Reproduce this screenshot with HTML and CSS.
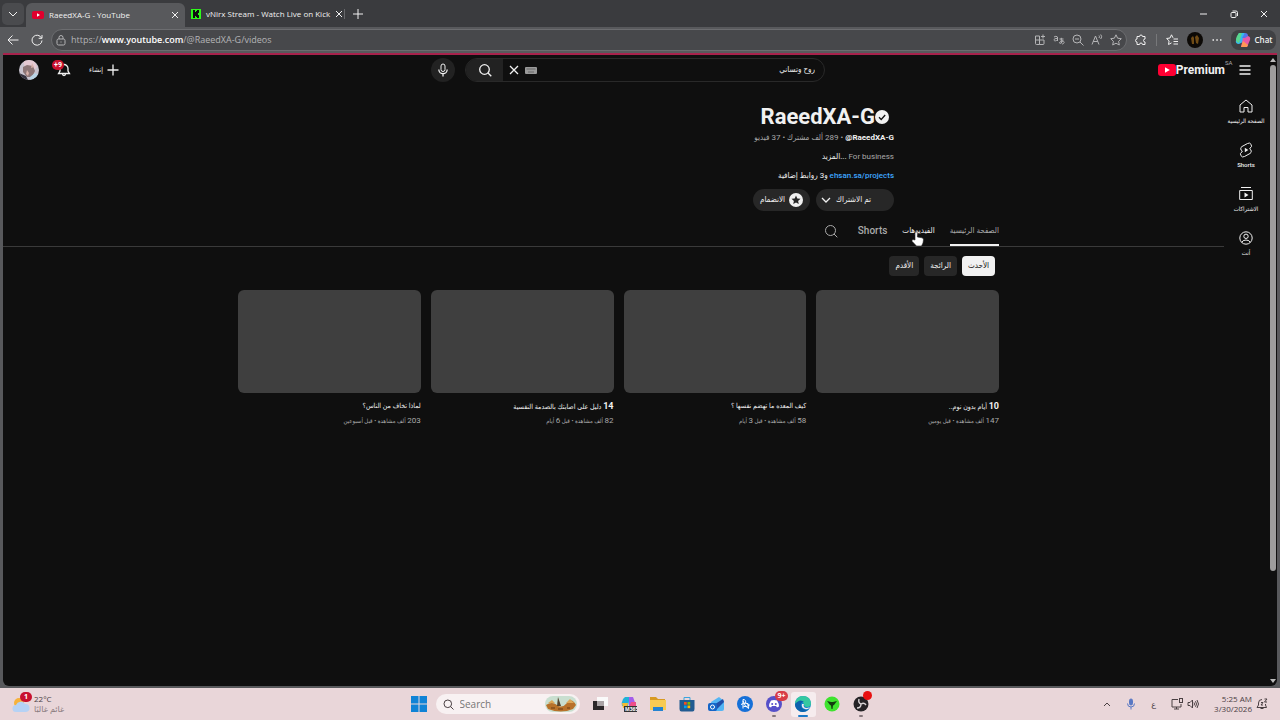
FILE: index.html
```
<!DOCTYPE html>
<html lang="ar">
<head>
    <meta charset="UTF-8">
    <meta name="viewport" content="width=device-width, initial-scale=1.0">
    <title>RaeedXA-G - YouTube</title>
    <link rel="stylesheet" href="styles.css">
</head>
<body>
    <!-- Browser tabs -->
    <header class="tabbar">
        <button class="tab-menu" aria-label="Tab actions"><svg width="10" height="10" viewBox="0 0 10 10"><path d="M1 3l4 4 4-4"/></svg></button>
        <div class="tab active">
            <svg width="12" height="10" viewBox="0 0 12 10"><rect x="0" y="1" width="12" height="8" rx="2" fill="#e0002d" stroke="none"/><path d="M5 3.2v3.6L8 5z" fill="#fff" stroke="none"/></svg>
            <span class="tab-title">RaeedXA-G - YouTube</span>
            <button class="tab-close" aria-label="Close tab"><svg width="8" height="8" viewBox="0 0 8 8"><path d="M1 1l6 6M7 1L1 7"/></svg></button>
        </div>
        <div class="tab">
            <svg width="10" height="10" viewBox="0 0 10 10"><rect width="10" height="10" fill="#2dfb19" stroke="none"/><path d="M2 1h2v2h1V2h1V1h2v3H7v2h1v3H6V8H5V7H4v2H2z" fill="#101010" stroke="none"/></svg>
            <span class="tab-title">vNirx Stream - Watch Live on Kick</span>
            <button class="tab-close" aria-label="Close tab"><svg width="8" height="8" viewBox="0 0 8 8"><path d="M1 1l6 6M7 1L1 7"/></svg></button>
        </div>
        <button class="new-tab" aria-label="New tab"><svg width="10" height="10" viewBox="0 0 10 10"><path d="M5 0v10M0 5h10"/></svg></button>
        <div class="window-buttons">
            <button aria-label="Minimize"><svg width="8" height="8" viewBox="0 0 8 8"><path d="M0 4h7"/></svg></button>
            <button aria-label="Restore"><svg width="8" height="8" viewBox="0 0 8 8"><rect x="1" y="2.5" width="5" height="5" rx="1"/><path d="M2.5 1h3.5a1.5 1.5 0 0 1 1.500 1.500v3.500"/></svg></button>
            <button aria-label="Close"><svg width="8" height="8" viewBox="0 0 8 8"><path d="M1 1l6 6M7 1L1 7"/></svg></button>
        </div>
    </header>

    <!-- Address bar -->
    <nav class="toolbar">
        <button aria-label="Back"><svg width="12" height="12" viewBox="0 0 12 12"><path d="M11.500 6H1M5.500 1.500L1 6l4.500 4.500"/></svg></button>
        <button aria-label="Reload"><svg width="12" height="12" viewBox="0 0 12 12"><path d="M10.500 4A5 5 0 1 0 11 6.500M11 1v3.300H7.700"/></svg></button>
        <div class="address">
            <svg width="10" height="11" viewBox="0 0 10 11"><rect x="1" y="4" width="8" height="6" rx="1.500"/><path d="M3 4V2.500a2 2 0 0 1 4 0V4M5 6.500v1"/></svg>
            <a class="url" href="#">https://<b>www.youtube.com</b>/@RaeedXA-G/videos</a>
            <div class="address-icons">
                <svg width="12" height="12" viewBox="0 0 12 12"><path d="M1.500 2H5.500V10.500H2.500a1 1 0 0 1-1-1zM1.500 6H10V9.500a1 1 0 0 1-1 1H5.500M9 .5v4M7 2.500h4"/></svg>
                <svg width="12" height="12" viewBox="0 0 12 12"><path d="M1 3q2-1.500 3.500 0V7M4.500 4.500C2 4.300 1 5 1 6s2 1.400 3.500-.3M6.500 5h4M8.300 3.800v5.500M10 6.200C9 9 7 10 6.500 9S9 6 10.500 7.300 10.500 10 9 10"/></svg>
                <svg width="12" height="12" viewBox="0 0 12 12"><circle cx="5" cy="5" r="4"/><path d="M3 5h4M8 8l3.500 3.500"/></svg>
                <svg width="12" height="12" viewBox="0 0 12 12"><path d="M1 10.500L4.500 2 8 10.500M2.200 7.500h4.600M8 1.500q1 1.200 0 2.500M9.700.5q2 2.200 0 4.500"/></svg>
                <svg width="12" height="12" viewBox="0 0 12 12"><path d="M6 .8l1.600 3.400 3.700.5-2.700 2.600.7 3.700L6 9.200 2.700 11l.7-3.700L.7 4.700l3.700-.5z"/></svg>
            </div>
        </div>
        <div class="toolbar-end">
            <button aria-label="Extensions"><svg width="12" height="12" viewBox="0 0 12 12"><path d="M2 2.500h2.500a1.500 1.500 0 0 1 3 0H10V5a1.500 1.500 0 0 0 0 3v2.500H7.500a1.500 1.500 0 0 0-3 0H2V8a1.500 1.500 0 0 1 0-3z"/></svg></button>
            <span class="divider"></span>
            <button aria-label="Favorites"><svg width="12" height="12" viewBox="0 0 12 12"><path d="M7 3.800L5.500.8 4 4l-3.400.5 2.500 2.400-.6 3.600 3-1.600M7.500 5H12M7.500 7.500H12M7.500 10H12"/></svg></button>
            <button aria-label="Profile"><svg width="16" height="16" viewBox="0 0 16 16"><circle cx="8" cy="8" r="8" fill="#0c0906" stroke="none"/><path d="M4 6l2-2 1 2v6H5zM8 5l2-2 2 3-1 6-2-1z" fill="#6f4b16" stroke="none"/></svg></button>
            <button aria-label="More"><svg width="10" height="10" viewBox="0 0 10 10"><path d="M.5 5h1.500M4.300 5h1.500M8 5h1.500" stroke-width="1.500"/></svg></button>
            <button class="chat"><svg width="16" height="16" viewBox="0 0 16 16"><path d="M4 1h6L8 10 4 12Q0 12 1 8z" fill="#35b8f0" stroke="none"/><path d="M4 1h3L4 11 2 10Q0 8 2 4z" fill="#58d68d" stroke="none"/><path d="M12 15H6L8 6l4-2q4 0 3 4z" fill="#e659a8" stroke="none"/><path d="M10 1q3 0 3 3l-3 2-3 0z" fill="#5574ec" stroke="none"/><path d="M6 15l2-6 5 4-1 2z" fill="#ff9855" stroke="none"/></svg><span>Chat</span></button>
        </div>
    </nav>

    <!-- YouTube page -->
    <div class="viewport" dir="rtl">
        <div class="scrollbar"><span class="arrow up"></span><span class="thumb"></span><span class="arrow down"></span></div>
        <div class="page">
            <header class="masthead">
                <div class="masthead-start">
                    <button aria-label="الدليل"><svg width="12" height="12" viewBox="0 0 12 12"><path d="M.5 2h11M.5 6h11M.5 10h11" stroke-width="1.500"/></svg></button>
                    <a class="logo" href="#" dir="ltr">
                        <svg width="18" height="12" viewBox="0 0 18 12"><rect width="18" height="12" rx="3" fill="#ff0033" stroke="none"/><path d="M7 3.300v5.400L11.800 6z" fill="#fff" stroke="none"/></svg>
                        <span>Premium</span><sup>SA</sup>
                    </a>
                </div>
                <div class="masthead-center">
                    <form class="search">
                        <input type="text" aria-label="بحث" value="روح وتساني">
                        <svg width="12" height="7" viewBox="0 0 12 7"><rect width="12" height="7" rx="1" fill="#9a9a9a" stroke="none"/><path d="M1.500 2h9M3 5h6" stroke="#666"/></svg>
                        <button type="button" class="clear" aria-label="مسح"><svg width="10" height="10" viewBox="0 0 10 10"><path d="M1 1l8 8M9 1L1 9" stroke-width="1.300"/></svg></button>
                        <button type="button" class="search-button" aria-label="بحث"><svg width="14" height="14" viewBox="0 0 14 14"><circle cx="6.500" cy="6.500" r="4.800" stroke-width="1.300"/><path d="M10 10l3.300 3.300" stroke-width="1.300"/></svg></button>
                    </form>
                    <button class="mic" aria-label="البحث الصوتي"><svg width="14" height="14" viewBox="0 0 14 14"><rect x="5" y="1" width="4" height="7.500" rx="2"/><path d="M2.800 6.500a4.200 4.200 0 0 0 8.400 0M7 11v2.500" stroke-width="1.300"/></svg></button>
                </div>
                <div class="masthead-end">
                    <button class="create"><svg width="12" height="12" viewBox="0 0 12 12"><path d="M6 .5v11M.5 6h11" stroke-width="1.300"/></svg><span>إنشاء</span></button>
                    <button class="bell" aria-label="الإشعارات"><svg width="14" height="14" viewBox="0 0 14 14"><path d="M7 1.500a4 4 0 0 0-4 4V8l-1.500 2.500h11L11 8V5.500a4 4 0 0 0-4-4zM5.500 11a1.500 1.500 0 0 0 3 0" stroke-width="1.300"/></svg><span class="badge" dir="ltr">+9</span></button>
                    <button aria-label="الحساب"><svg width="20" height="20" viewBox="0 0 20 20"><defs><clipPath id="face"><circle cx="10" cy="10" r="10"/></clipPath></defs><g clip-path="url(#face)" stroke="none"><path fill="#c9c4cf" d="M0 0h20v20H0z"/><path d="M4 0h11l3 7-4 4-8-3z" fill="#e5c9d2"/><path d="M4 7l4-2 6 1 2 5-3 6H8L4 12z" fill="#8d7677"/><path d="M0 13l7 3 2 4H0z" fill="#35323f"/><path d="M8 10l2 3-1 3-2-2zM13 3l2 4-3 1z" fill="#d7b1aa"/><path d="M11 17l5-4 4 2v5h-9z" fill="#b9d4e5"/></g></svg></button>
                </div>
            </header>

            <div class="layout">
                <aside class="guide">
                    <a href="#"><svg width="16" height="16" viewBox="0 0 16 16"><path d="M2 7l6-5 6 5v7h-4V9.500H6V14H2z"/></svg><span>الصفحة الرئيسية</span></a>
                    <a href="#"><svg width="16" height="16" viewBox="0 0 16 16"><path d="M9.500 1.500L4 4.500a2.500 2.500 0 0 0 .3 4.500L3.800 10a2.500 2.500 0 0 0 2.700 4.500L12 11.500a2.500 2.500 0 0 0-.3-4.500l.5-1a2.500 2.500 0 0 0-2.700-4.500z"/><path d="M6.800 5.800v4.400L10.300 8z" fill="#f1f1f1" stroke="none"/></svg><span>Shorts</span></a>
                    <a href="#"><svg width="16" height="16" viewBox="0 0 16 16"><path d="M3 1.500h10M1.700 4.500h12.600v9H1.700z"/><path d="M6.500 6.500v5L10.500 9z" fill="#f1f1f1" stroke="none"/></svg><span>الاشتراكات</span></a>
                    <a href="#"><svg width="16" height="16" viewBox="0 0 16 16"><circle cx="8" cy="8" r="6.200"/><circle cx="8" cy="6.300" r="2.200"/><path d="M3.800 12.500q.7-2.500 4.200-2.500t4.200 2.500"/></svg><span>أنت</span></a>
                </aside>

                <main class="channel">
                    <section class="profile column">
                        <h1>RaeedXA-G<svg width="14" height="14" viewBox="0 0 14 14"><circle cx="7" cy="7" r="7" fill="#f1f1f1" stroke="none"/><path d="M4 7.300l2.200 2.200 4-4.500" stroke="#0f0f0f" stroke-width="1.300"/></svg></h1>
                        <p><b dir="ltr">@RaeedXA-G</b> • 289 ألف مشترك • 37 فيديو</p>
                        <p>For business <span>...المزيد</span></p>
                        <p><a href="#">ehsan.sa/projects</a> <span>و3 روابط إضافية</span></p>
                        <div class="actions">
                            <button class="subscribed"><span>تم الاشتراك</span><svg width="10" height="10" viewBox="0 0 10 10"><path d="M1 3l4 4 4-4" stroke-width="1.300"/></svg></button>
                            <button class="join"><svg width="14" height="14" viewBox="0 0 14 14"><circle cx="7" cy="7" r="7" fill="#f1f1f1" stroke="none"/><path d="M7 2.500l1.300 3 3.200.3-2.400 2.100.7 3.200L7 9.400l-2.800 1.700.7-3.200-2.400-2.100 3.200-.3z" fill="#272727" stroke="none"/></svg><span>الانضمام</span></button>
                        </div>
                    </section>

                    <div class="channel-tabs">
                        <div class="column">
                            <a class="selected" href="#">الصفحة الرئيسية</a>
                            <a class="hovered" href="#">الفيديوهات
                                <svg class="cursor" width="14" height="16" viewBox="0 0 14 16"><path d="M4 9V2a1.200 1.200 0 0 1 2.400 0v4l4.600.8q1.500.3 1.500 2L12 12l-1.500 3H5.500L1 10.300Q.5 9 2 8.500z" fill="#fff" stroke="#222" stroke-width=".6"/></svg></a>
                            <a class="shorts" href="#">Shorts</a>
                            <button aria-label="بحث"><svg width="14" height="14" viewBox="0 0 14 14"><circle cx="6.500" cy="6.500" r="5"/><path d="M10 10l3.300 3.300"/></svg></button>
                        </div>
                    </div>

                    <div class="chips column">
                        <button class="on">الأحدث</button>
                        <button>الرائجة</button>
                        <button>الأقدم</button>
                    </div>

                    <section class="videos column">
                        <article>
                            <div class="thumbnail"></div>
                            <h3><b>10</b> أيام بدون نوم..</h3>
                            <p><span>147</span> ألف مشاهدة • قبل يومين</p>
                        </article>
                        <article>
                            <div class="thumbnail"></div>
                            <h3>كيف المعده ما تهضم نفسها ؟</h3>
                            <p><span>58</span> ألف مشاهدة • قبل <span>3</span> أيام</p>
                        </article>
                        <article>
                            <div class="thumbnail"></div>
                            <h3><b>14</b> دليل على اصابتك بالصدمة النفسية</h3>
                            <p><span>82</span> ألف مشاهدة • قبل <span>6</span> أيام</p>
                        </article>
                        <article>
                            <div class="thumbnail"></div>
                            <h3>لماذا تخاف من الناس؟</h3>
                            <p><span>203</span> ألف مشاهدة • قبل أسبوعين</p>
                        </article>
                    </section>
                </main>
            </div>
        </div>
    </div>

    <!-- Windows taskbar -->
    <footer class="taskbar">
        <div class="weather">
            <svg width="18" height="18" viewBox="0 0 18 18"><circle cx="7" cy="8" r="5" fill="#f6b23c" stroke="none"/><path d="M4 17a3.500 3.500 0 0 1 0-7 5 5 0 0 1 9-1 4 4 0 0 1 1 8z" fill="#b5d2f5" stroke="none"/></svg>
            <span class="badge">1</span>
            <div><span>22°C</span><span class="muted" dir="rtl">غائم غالبًا</span></div>
        </div>
        <div class="apps">
            <button aria-label="Start"><svg width="16" height="16" viewBox="0 0 16 16"><path d="M0 0h7.500v7.500H0zM8.500 0H16v7.500H8.500zM0 8.500h7.500V16H0zM8.500 8.500H16V16H8.500z" fill="#0f83d6" stroke="none"/></svg></button>
            <label class="task-search">
                <svg width="11" height="11" viewBox="0 0 11 11"><circle cx="4.800" cy="4.800" r="3.800"/><path d="M7.500 7.500l3 3"/></svg>
                <input type="text" placeholder="Search" aria-label="Search">
                <svg width="32" height="16" viewBox="0 0 32 16"><rect width="32" height="16" rx="8" fill="#c9dfd0" stroke="none"/><path d="M1 9q6-4 11 0t10-2 9 2l-3 4q-12 5-25 0z" fill="#b8722a" stroke="none"/><path d="M3 7l4-3 3 3zM21 7l4-4 4 4z" fill="#dca859" stroke="none"/><path d="M12 10l1-9 1 3 2 6z" fill="#57452e" stroke="none"/><path d="M6 12h4M13 13h5M22 12h3" stroke="#6a3c14"/></svg>
            </label>
            <button aria-label="Task view"><svg width="16" height="16" viewBox="0 0 16 16"><path fill="#fafafa" stroke="none" d="M5 1h11v9H5z"/><path fill="#2c2729" stroke="none" d="M1 5h11v9H1z"/><path fill="#aaa3a5" stroke="none" d="M5 5h7v5H5z"/></svg></button>
            <button aria-label="Copilot"><svg width="16" height="16" viewBox="0 0 16 16"><path d="M4 1h5L7 10H1Q0 7 2 3z" fill="#20b2d8" stroke="none"/><path d="M8 1h4l3 8-3 4H8z" fill="#a45cea" stroke="none"/><path d="M1 7h6l-1 5H2z" fill="#f5ba32" stroke="none"/><path d="M10 6h5v5H8z" fill="#ed4d88" stroke="none"/><path d="M3 10h13v6H3z" fill="#333" stroke="none"/><text class="app-label" x="4" y="15">M365</text></svg></button>
            <button aria-label="File Explorer"><svg width="16" height="16" viewBox="0 0 16 16"><path d="M0 1h6l2 2h7v11H0z" fill="#d89a22" stroke="none"/><path d="M0 4h16v10H0z" fill="#f8cb52" stroke="none"/><path d="M3 11h10v4H3z" fill="#2383d1" stroke="none"/></svg></button>
            <button aria-label="Store"><svg width="16" height="16" viewBox="0 0 16 16"><path d="M5 4V1.500h6V4" stroke="#3aa5df"/><path d="M.5 4h15v9q0 2.500-2 2.500h-11q-2 0-2-2.500z" fill="#215b91" stroke="none"/><path d="M5 6h2.700v2.700H5z" fill="#f25022" stroke="none"/><path d="M8.500 6h2.700v2.700H8.500z" fill="#7fba00" stroke="none"/><path d="M5 9.500h2.700v2.700H5z" fill="#00a4ef" stroke="none"/><path d="M8.500 9.500h2.700v2.700H8.500z" fill="#ffb900" stroke="none"/></svg></button>
            <button aria-label="Outlook"><svg width="16" height="16" viewBox="0 0 16 16"><path d="M3 6l8-5 5 4v8q0 2-2 2H5z" fill="#54b5f4" stroke="none"/><path d="M4 10l11-7 1 3-9 9z" fill="#234ea8" stroke="none"/><rect y="7" width="9" height="8" rx="2" fill="#1565c8" stroke="none"/><circle cx="4.500" cy="11" r="2" stroke="#fff"/></svg></button>
            <button aria-label="Battle.net"><svg width="16" height="16" viewBox="0 0 16 16"><circle cx="8" cy="8" r="8" fill="#1670d8" stroke="none"/><path d="M6 12.500V3.500q3.500 0 2.500 4M4 8.500q5-3 8.500.5-2 2-6 1.500M6 5q2 6 5.500 7.500 1-2-1.500-5.500" stroke="#fff"/></svg></button>
            <button class="running" aria-label="Discord"><svg width="16" height="16" viewBox="0 0 16 16"><circle cx="8" cy="8" r="8" fill="#5650c9" stroke="none"/><path d="M5 4.500q3-1 6 0 2 3 2 6l-2 1-1-1.500H6L5 11.500l-2-1q0-3 2-6z" fill="#fff" stroke="none"/><circle cx="6.200" cy="8" r="1" fill="#5650c9" stroke="none"/><circle cx="9.800" cy="8" r="1" fill="#5650c9" stroke="none"/></svg><span class="badge">9+</span></button>
            <button class="running current" aria-label="Edge"><svg width="16" height="16" viewBox="0 0 16 16"><circle cx="8" cy="8" r="8" fill="#1587cb" stroke="none"/><path d="M0 8Q1 0 8 0t8 7q0 4-4 4-3 0-3-3-2-5-9 0z" fill="#35c8a1" stroke="none"/><path d="M0 8q5-6 9-2-4 0-3 4t7 4Q7 18 3 14 0 12 0 8z" fill="#0d61ad" stroke="none"/><path d="M9 8q-1 1 0 3 2 2 6 0-2 3-5 2-4-1-3-5z" fill="#f3e9ec" stroke="none"/></svg></button>
            <button aria-label="Game app"><svg width="16" height="16" viewBox="0 0 16 16"><circle cx="8" cy="8" r="7.500" fill="#3fe32f" stroke="none"/><path d="M3 5l4 1h2l4-1-3 4-1 .5L8.500 13h-1L7 9.500 6 9z" fill="#123c10" stroke="none"/></svg></button>
            <button class="running" aria-label="OBS"><svg width="16" height="16" viewBox="0 0 16 16"><circle cx="8" cy="8" r="7.500" fill="#252326" stroke="none"/><path d="M8 8Q5 7 6 3M8 8q3-2 5 1M8 8q0 4-4 4" stroke="#d9d4d6" stroke-width="1.400"/></svg><span class="badge dot"></span></button>
        </div>
        <div class="tray">
            <svg width="8" height="8" viewBox="0 0 8 8"><path d="M1 6l3-3 3 3"/></svg>
            <svg class="tray-mic" width="10" height="12" viewBox="0 0 10 12"><rect x="3.500" y="1" width="3" height="6" rx="1.500" fill="#5878c4"/><path d="M1.500 5.500a3.500 3.500 0 0 0 7 0M5 9v2.500"/></svg>
            <span>ع</span>
            <div class="tray-group">
                <svg width="12" height="12" viewBox="0 0 12 12"><path d="M7 1.500H1V9h9V6M3 11h5M5.500 9v2"/><rect x="8.500" y=".5" width="3" height="4"/></svg>
                <svg width="12" height="12" viewBox="0 0 12 12"><path d="M1 4.500h2L5.500 2v8L3 7.500H1zM7 4.500q1 1.500 0 3M8.500 3.200q2 2.800 0 5.600M10 2q3 4 0 8"/></svg>
            </div>
            <div class="tray-group">
                <div class="clock"><span>5:25 AM</span><span>3/30/2026</span></div>
                <svg width="12" height="12" viewBox="0 0 12 12"><path d="M6 1.500a3.500 3.500 0 0 0-3.500 3.500v2L1 9.500h9.500L9.500 7V6M4.500 10.500h3M5 4.500h2l-2 2.500h2M8.500 1h2.500l-2.500 3H11"/></svg>
            </div>
        </div>
    </footer>
</body>
</html>
```
FILE: styles.css
```
* {
    box-sizing: border-box;
}
body {
    margin: 0;
    min-height: 100vh;
    display: flex;
    flex-direction: column;
    background: #58595c;
    font-family: Roboto, "DejaVu Sans Condensed", "DejaVu Sans", sans-serif;
    font-size: 8px;
    line-height: 12px;
    color: #f1f1f1;
}
button {
    display: flex;
    align-items: center;
    justify-content: center;
    padding: 0;
    border: 0;
    background: none;
    color: inherit;
    font: inherit;
    cursor: pointer;
}
a {
    color: inherit;
    text-decoration: none;
}
input {
    min-width: 0;
    padding: 0;
    border: 0;
    outline: 0;
    background: none;
    color: inherit;
    font: inherit;
}
svg {
    display: block;
    flex: none;
    fill: none;
    stroke: currentColor;
}

/* Browser */
.tabbar, .toolbar {
    display: flex;
    align-items: center;
    font-family: "Open Sans", sans-serif;
}
.tabbar {
    height: 27px;
    background: #3a3b3e;
}
.tab-menu {
    width: 22px;
    height: 22px;
    margin: 0 2px;
    border-radius: 5px;
    background: #4a4b4e;
}
.tab {
    display: flex;
    align-items: center;
    width: 159px;
    padding: 0 6px;
    gap: 5px;
    white-space: nowrap;
}
.tab.active {
    align-self: stretch;
    margin-top: 3px;
    border-radius: 6px 6px 0 0;
    background: #58595c;
}
.tab-title {
    flex: 1;
    font-weight: 500;
}
.new-tab {
    padding-left: 8px;
    border-left: 1px solid #66676a;
}
.window-buttons {
    display: flex;
    gap: 22px;
    margin-left: auto;
    padding-right: 12px;
}
.toolbar {
    height: 26px;
    gap: 12px;
    padding: 0 4px 0 7px;
}
.address {
    flex: 1;
    display: flex;
    align-items: center;
    gap: 5px;
    height: 22px;
    margin-left: -4px;
    padding: 0 4px;
    border: 1px solid #6c6d70;
    border-radius: 11px;
    background: #47484b;
    color: #b4b4b6;
}
.url {
    flex: 1;
    font-size: 9px;
}
.url b {
    font-weight: 600;
    color: #fff;
}
.address-icons {
    display: flex;
    gap: 7px;
}
.toolbar-end {
    display: flex;
    align-items: center;
    gap: 9px;
    margin-left: -4px;
}
.divider {
    width: 1px;
    height: 12px;
    background: #77787a;
}
.chat {
    gap: 4px;
    width: 45px;
    height: 20px;
    border-radius: 8px;
    background: #404144;
    font-weight: 600;
}

/* YouTube */
.viewport {
    flex: 1;
    display: flex;
    margin: 0 3px 2px;
    border-top: 2px solid #a8224c;
    border-radius: 0 0 6px 6px;
    background: #0f0f0f;
}
.scrollbar {
    display: flex;
    flex-direction: column;
    align-items: center;
    width: 9px;
    padding: 3px 0;
}
.thumb {
    width: 6px;
    flex: 0 0 81%;
    margin: 3px 0 auto;
    border-radius: 3px;
    background: #9d9d9d;
}
.arrow {
    border: 3px solid transparent;
}
.arrow.up {
    border-top: 0;
    border-bottom: 4px solid #bbb;
}
.arrow.down {
    border-bottom: 0;
    border-top: 4px solid #bbb;
}
.page {
    flex: 1;
}
.masthead {
    display: flex;
    align-items: center;
    justify-content: space-between;
    height: 30px;
    padding: 0 17px 0 16px;
}
.masthead-start {
    display: flex;
    align-items: center;
    gap: 14px;
    width: 116px;
}
.logo {
    display: flex;
    align-items: center;
    position: relative;
    font-size: 12px;
    font-weight: 700;
}
.logo sup {
    position: absolute;
    left: 100%;
    top: -5px;
    font-size: 6px;
    line-height: 8px;
    font-weight: 400;
    color: #aaa;
}
.masthead-center {
    display: flex;
    align-items: center;
    flex: 0 1 394px;
    gap: 10px;
}
.search {
    flex: 1;
    display: flex;
    align-items: center;
    gap: 6px;
    height: 24px;
    padding-right: 9px;
    overflow: hidden;
    border: 1px solid #292929;
    border-radius: 12px;
}
.search input {
    flex: 1;
}
.search-button {
    width: 37px;
    height: 24px;
    background: #222;
}
.mic {
    width: 24px;
    height: 24px;
    border-radius: 50%;
    background: #222;
}
.masthead-end {
    display: flex;
    align-items: center;
    justify-content: flex-end;
    width: 102px;
    gap: 18px;
}
.create {
    gap: 4px;
    font-size: 7px;
}
.bell {
    position: relative;
}
.badge {
    position: absolute;
    min-width: 12px;
    padding: 0 2px;
    border-radius: 6px;
    background: #c8102e;
    color: #fff;
    font-size: 7px;
    line-height: 10px;
    font-weight: 700;
    text-align: center;
}
.bell .badge {
    left: -5px;
    top: -3px;
}
.layout {
    display: flex;
}
.guide {
    display: flex;
    flex-direction: column;
    width: 44px;
    padding-top: 13px;
    gap: 12px;
}
.guide a {
    display: flex;
    flex-direction: column;
    align-items: center;
    gap: 3px;
    height: 32px;
    font-size: 6px;
    line-height: 8px;
    font-weight: 500;
    white-space: nowrap;
}
.channel {
    flex: 1;
}
.column {
    max-width: 771px;
    margin: 0 auto;
    padding-left: 10px;
}
.profile {
    padding-top: 19px;
    padding-right: 105px;
}
h1 {
    display: flex;
    flex-direction: row-reverse;
    justify-content: flex-end;
    align-items: center;
    margin: 0;
    padding-right: 5px;
    font-size: 22px;
    line-height: 26px;
    font-weight: 700;
}
.profile p {
    height: 12px;
    margin: 2px 0 7px;
    color: #aaa;
}
.profile p + p {
    margin-top: 0;
}
.profile p b {
    color: #f1f1f1;
    font-weight: 700;
}
.profile p span {
    color: #f1f1f1;
}
.profile p a {
    color: #3ea6ff;
    font-weight: 500;
}
.actions {
    display: flex;
    gap: 6px;
}
.actions button {
    height: 22px;
    border-radius: 11px;
    background: #272727;
    white-space: nowrap;
}
.actions .subscribed {
    justify-content: flex-start;
    width: 78px;
    gap: 5px;
    padding-right: 23px;
}
.join {
    width: 57px;
    gap: 4px;
}
.channel-tabs {
    margin-top: 7px;
    border-bottom: 1px solid #3a3a3a;
}
.channel-tabs .column {
    display: flex;
    gap: 15px;
    color: #aaa;
}
.channel-tabs a {
    position: relative;
    height: 28px;
    padding-top: 7px;
    font-weight: 500;
    white-space: nowrap;
}
.channel-tabs .selected {
    border-bottom: 2px solid #f1f1f1;
}
.channel-tabs .hovered {
    color: #f1f1f1;
}
.channel-tabs .shorts {
    font-size: 10px;
}
.channel-tabs button {
    height: 26px;
    margin-right: 5px;
}
.cursor {
    position: absolute;
    left: 9px;
    top: 13px;
}
.chips {
    display: flex;
    gap: 5px;
    padding-top: 9px;
    padding-right: 4px;
}
.chips button {
    height: 20px;
    padding: 0 6px;
    border-radius: 4px;
    background: #272727;
}
.chips .on {
    background: #f1f1f1;
    color: #0f0f0f;
}
.videos {
    display: grid;
    grid-template-columns: repeat(4, 1fr);
    gap: 10px;
    padding-top: 14px;
}
.thumbnail {
    aspect-ratio: 16 / 9;
    border-radius: 6px;
    background: #3f3f3f;
}
.videos h3 {
    height: 12px;
    margin: 7px 0 3px;
    font-size: 7px;
    font-weight: 400;
}
.videos h3 b {
    font-size: 9px;
}
.videos p {
    height: 12px;
    margin: 0;
    font-size: 6px;
    color: #aaa;
}
.videos p span {
    font-size: 8px;
}

/* Taskbar */
.taskbar {
    display: grid;
    grid-template-columns: 1fr auto 1fr;
    align-items: center;
    height: 32px;
    background: #e9d6d9;
    color: #4a4043;
    font-family: "Open Sans", "DejaVu Sans", sans-serif;
    line-height: 10px;
}
.weather {
    position: relative;
    display: flex;
    align-items: center;
    gap: 4px;
    padding-left: 12px;
}
.weather div, .clock {
    display: flex;
    flex-direction: column;
}
.weather .badge {
    left: 20px;
    top: -2px;
    padding: 0;
}
.muted {
    color: #8b7c80;
}
.apps {
    display: flex;
    align-items: center;
    gap: 4px;
}
.apps button {
    position: relative;
    width: 25px;
    height: 25px;
    border-radius: 3px;
}
.app-label {
    fill: #fff;
    stroke: none;
    font-size: 5px;
    font-weight: 700;
}
.task-search {
    display: flex;
    align-items: center;
    gap: 6px;
    width: 144px;
    height: 20px;
    margin-right: 4px;
    padding: 0 3px 0 7px;
    border-radius: 10px;
    background: #f8f1f2;
}
.task-search input {
    flex: 1;
    font-size: 10px;
}
.apps .badge {
    right: -1px;
    top: -1px;
    background: #d83b46;
}
.apps .badge.dot {
    right: 2px;
    min-width: 9px;
    height: 9px;
    background: #e81010;
}
.running::after {
    content: "";
    position: absolute;
    bottom: 0;
    width: 4px;
    height: 2px;
    border-radius: 1px;
    background: #85777b;
}
.running.current {
    background: #f6ecee;
}
.running.current::after {
    width: 10px;
    background: #1a78c8;
}
.tray {
    display: flex;
    align-items: center;
    justify-content: flex-end;
    gap: 15px;
    padding-right: 12px;
}
.tray-mic {
    color: #5878c4;
}
.tray-group {
    display: flex;
    align-items: center;
    gap: 4px;
}
.clock {
    text-align: right;
}
```
